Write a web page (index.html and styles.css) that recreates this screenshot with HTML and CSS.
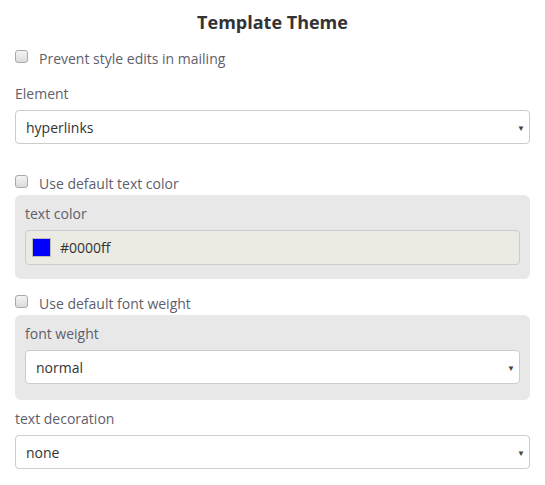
FILE: index.html
```html
<!DOCTYPE html>
<html>
<head>
<meta charset="utf-8">
<link rel="stylesheet" href="styles.css">
</head>
<body>
<div class="page">
  <h1 class="title">Template Theme</h1>
  <label class="check first"><span class="box"></span><span>Prevent style edits in mailing</span></label>
  <div class="field top">
    <div class="label">Element</div>
    <div class="select"><span>hyperlinks</span><span class="arrow">▼</span></div>
  </div>
  <label class="check gap"><span class="box"></span><span>Use default text color</span></label>
  <div class="panel">
    <div class="label">text color</div>
    <div class="color-input"><span class="swatch"></span><span>#0000ff</span></div>
  </div>
  <label class="check after-panel"><span class="box"></span><span>Use default font weight</span></label>
  <div class="panel panel-select">
    <div class="label">font weight</div>
    <div class="select"><span>normal</span><span class="arrow">▼</span></div>
  </div>
  <div class="field after-panel2">
    <div class="label">text decoration</div>
    <div class="select"><span>none</span><span class="arrow">▼</span></div>
  </div>
</div>
</body>
</html>
```
FILE: styles.css
```css
* { box-sizing: border-box; }
html, body { margin: 0; padding: 0; background: #fff; }
body {
  font-family: "Open Sans", Lato, sans-serif;
  font-size: 14px;
  color: #555;
}
.page {
  padding: 0 15px;
  display: flex;
  flex-direction: column;
}
.title {
  margin: 9px 0 0;
  text-align: center;
  font-size: 18px;
  font-weight: 700;
  color: #333;
  line-height: 27px;
}
.check {
  display: flex;
  align-items: center;
  gap: 11px;
  height: 20px;
  color: #5e5e6c;
}
.check.first { margin-top: 12px; }
.check.gap { margin-top: 29px; }
.check.after-panel { margin-top: 14px; }
.box {
  width: 13px;
  height: 13px;
  border: 1px solid #a9a9a9;
  border-radius: 3px;
  background: linear-gradient(#f4f4f4, #dcdcdc);
  margin-top: -3px;
}
.field.top { margin-top: 16px; }
.field.after-panel2 { margin-top: 9px; }
.label {
  line-height: 20px;
  color: #5e5e6c;
  margin-bottom: 6px;
}
.select {
  height: 34px;
  border: 1px solid #ccc;
  border-radius: 4px;
  background: #fff;
  display: flex;
  align-items: center;
  justify-content: space-between;
  padding: 0 4px 0 10px;
  color: #333;
}
.arrow {
  font-size: 8px;
  color: #444;
}
.panel {
  margin-top: 2px;
  background: #e8e8e8;
  border-radius: 6px;
  padding: 9px 10px 14px;
}
.panel.panel-select { padding-bottom: 16px; margin-top: 2px; }
.color-input {
  height: 35px;
  border: 1px solid #ccc;
  border-radius: 4px;
  background: #ebebe4;
  display: flex;
  align-items: center;
  gap: 9px;
  padding: 0 6px;
  color: #333;
}
.swatch {
  width: 19px;
  height: 19px;
  background: #0000ff;
  border: 1px solid #bbb;
}
```
